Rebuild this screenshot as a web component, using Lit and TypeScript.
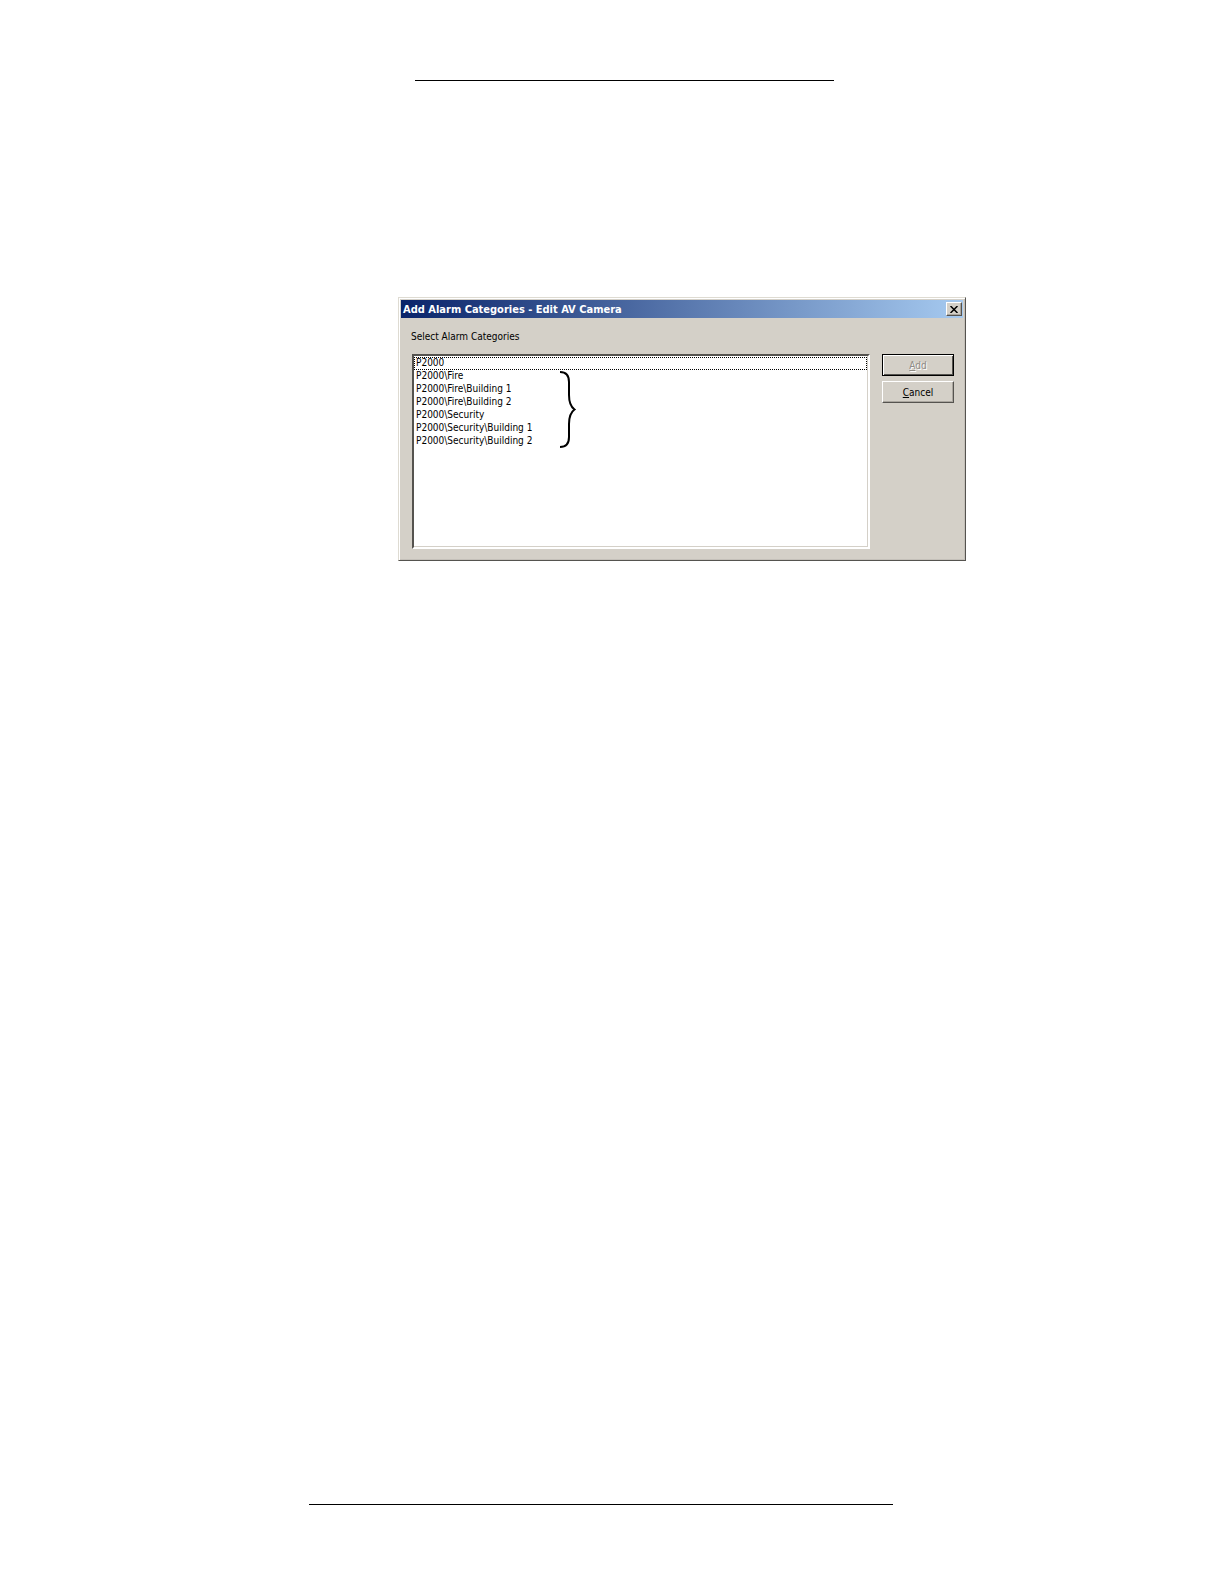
import {LitElement, css, html} from 'lit';
import {customElement, property} from 'lit/decorators.js';

@customElement('alarm-dialog')
export class AlarmDialog extends LitElement {

    @property() heading = '';
    @property({attribute: false}) categories: string[] = [];

    static styles = css`
        :host {
            display: block;
            box-sizing: border-box;
            padding: 1px;
            border: 1px solid;
            border-color: #dedbd2 #55534f #55534f #dedbd2;
            background: #d4d0c8;
            box-shadow: inset 1px 1px #fff, inset -1px -1px #c4c0b9;
            color: #000;
            font: 10px/13px "DejaVu Sans Condensed", "DejaVu Sans", sans-serif;
        }

        button {
            box-sizing: border-box;
            padding: 0;
            border: 1px solid;
            border-color: #fff #55534f #55534f #fff;
            background: #d4d0c8;
            box-shadow: inset -1px -1px #aaa69f;
            color: #000;
            font: inherit;
        }

        .titlebar {
            display: flex;
            align-items: center;
            justify-content: space-between;
            height: 18px;
            margin: 1px;
            padding: 0 1px 0 2px;
            background: linear-gradient(to right, #0a246a, #a6caf0);
        }

        h1 {
            margin: 0;
            color: #fff;
            font-size: 11px;
            font-weight: bold;
        }

        .close {
            display: flex;
            align-items: center;
            justify-content: center;
            width: 16px;
            height: 14px;
        }

        .content {
            display: grid;
            grid-template-columns: 1fr 72px;
            column-gap: 12px;
            padding: 11px 10px 10px 11px;
        }

        label {
            grid-column: 1 / -1;
            margin-bottom: 11px;
        }

        .listbox {
            position: relative;
            display: flex;
            margin-left: 1px;
        }

        select {
            flex: 1;
            box-sizing: border-box;
            min-width: 0;
            height: 195px;
            margin: 0;
            padding: 1px 0 0;
            appearance: none;
            border: 2px solid;
            border-color: #55534f #fff #fff #55534f;
            border-radius: 0;
            outline: none;
            overflow: hidden;
            background: #fff;
            box-shadow: inset -1px -1px #d4d0c8;
            color: #000;
            font: inherit;
        }

        option {
            box-sizing: border-box;
            height: 13px;
            min-height: 0;
            margin: 0 1px 0 0;
            padding: 0 2px;
        }

        option.current {
            outline: 1px dotted #000;
            outline-offset: -1px;
        }

        .brace {
            position: absolute;
            left: 147px;
            top: 16px;
            pointer-events: none;
        }

        .actions {
            display: flex;
            flex-direction: column;
            gap: 5px;
        }

        .actions button {
            height: 22px;
        }

        .actions .default {
            border-color: #000;
            box-shadow: inset 1px 1px #fff, inset -1px -1px #55534f;
        }

        .actions button:disabled {
            color: #8f8c86;
            text-shadow: 1px 1px #fff;
        }
    `;

    render() {
        return html`
            <div class="titlebar">
                <h1>${this.heading}</h1>
                <button class="close" aria-label="Close">
                    <svg width="8" height="7" viewBox="0 0 8 7">
                        <path d="M0.5 0 L7.5 7 M7.5 0 L0.5 7" stroke="#000" stroke-width="1.5"/>
                    </svg>
                </button>
            </div>
            <div class="content">
                <label for="categories">Select Alarm Categories</label>
                <div class="listbox">
                    <select id="categories" multiple>
                        ${this.categories.map((name, i) => html`
                            <option class=${i === 0 ? 'current' : ''}>${name}</option>
                        `)}
                    </select>
                    <svg class="brace" width="18" height="80" viewBox="0 0 18 80" fill="none">
                        <path d="M1 2 C7 2 10 5 10 12 V25 C10 33 12 37 15.500 39.500 C12 42 10 46 10 54 V67 C10 74 7 77 1 77"
                            stroke="#000" stroke-width="2"/>
                    </svg>
                </div>
                <div class="actions">
                    <button class="default" disabled><u>A</u>dd</button>
                    <button><u>C</u>ancel</button>
                </div>
            </div>
        `;
    }
}

@customElement('app-root')
export class AppRoot extends LitElement {

    categories = [
        'P2000',
        'P2000\\Fire',
        'P2000\\Fire\\Building 1',
        'P2000\\Fire\\Building 2',
        'P2000\\Security',
        'P2000\\Security\\Building 1',
        'P2000\\Security\\Building 2',
    ];

    static styles = css`
        :host {
            display: flex;
            flex-direction: column;
            box-sizing: border-box;
            min-height: 100vh;
            padding: 80px 0 79px;
            background: #fff;
        }

        header, main, footer {
            display: grid;
        }

        header {
            grid-template-columns: 415fr 419fr 390fr;
        }

        main {
            grid-template-columns: 398fr 568fr 258fr;
            margin-top: 216px;
        }

        footer {
            grid-template-columns: 309fr 584fr 331fr;
            margin-top: auto;
        }

        hr {
            grid-column: 2;
            width: 100%;
            margin: 0;
            border: 0;
            border-top: 1px solid #000;
        }

        alarm-dialog {
            grid-column: 2;
        }
    `;

    render() {
        return html`
            <header><hr></header>
            <main>
                <alarm-dialog
                    heading="Add Alarm Categories - Edit AV Camera"
                    .categories=${this.categories}></alarm-dialog>
            </main>
            <footer><hr></footer>
        `;
    }
}
